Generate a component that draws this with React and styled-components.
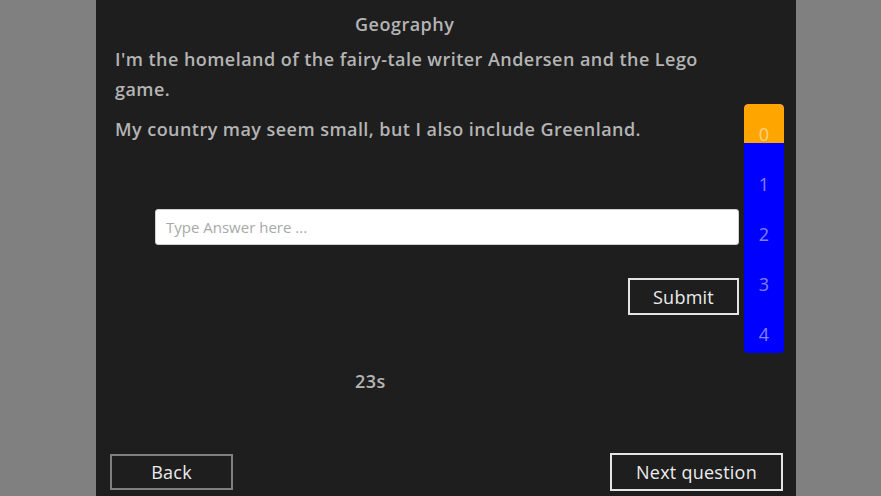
import React from "react";
import styled, { createGlobalStyle } from "styled-components";

const Global = createGlobalStyle`
  html, body { margin: 0; padding: 0; background: #808080; }
  body { font-family: "Open Sans", "Noto Sans", sans-serif; }
  * { box-sizing: border-box; }
`;

const Page = styled.div`
  display: flex;
  padding-left: 96px;
  height: 496px;
  overflow: hidden;
`;

const Panel = styled.div`
  width: 700px;
  height: 496px;
  background: #1e1e1e;
  display: flex;
  flex-direction: column;
`;

const Title = styled.div`
  padding: 12px 0 0 259px;
  font-size: 18px;
  line-height: 24px;
  font-weight: 600;
  letter-spacing: 0.5px;
  color: #b4b4b4;
`;

const Body = styled.div`
  display: flex;
  margin-top: 8px;
  padding-right: 12px;
`;

const Main = styled.div`
  flex: 1;
  padding-left: 19px;
  display: flex;
  flex-direction: column;
`;

const Question = styled.p`
  margin: ${(p) => (p.$first ? "0" : "10px")} 0 0;
  max-width: 600px;
  font-size: 18px;
  line-height: 30px;
  font-weight: 600;
  letter-spacing: 0.45px;
  color: #b4b4b4;
`;

const Input = styled.input`
  margin: 65px 0 0 40px;
  height: 36px;
  border: 1px solid #d0d0d0;
  border-radius: 3px;
  background: #fff;
  padding: 0 10px;
  font-family: inherit;
  font-size: 15px;
  outline: none;
  &::placeholder { color: #a8a8a8; }
`;

const Button = styled.button`
  background: transparent;
  border: 2px solid ${(p) => (p.$muted ? "#808080" : "#e4e4e4")};
  color: #ececec;
  font-family: inherit;
  font-size: 18px;
  letter-spacing: 0.25px;
  padding: 0;
  width: ${(p) => p.$w}px;
  height: ${(p) => p.$h}px;
  cursor: pointer;
`;

const SubmitRow = styled.div`
  display: flex;
  justify-content: flex-end;
  margin-top: 33px;
`;

const Timer = styled.div`
  margin-top: 54px;
  padding-left: 240px;
  font-size: 18px;
  line-height: 24px;
  font-weight: 600;
  letter-spacing: 0.5px;
  color: #b4b4b4;
`;

const Sidebar = styled.div`
  width: 40px;
  margin: 60px 0 0 5px;
  background: #0000ff;
  border-radius: 4px;
  overflow: hidden;
  align-self: flex-start;
  display: flex;
  flex-direction: column;
`;

const Step = styled.div`
  height: ${(p) => (p.$last ? 49 : 50)}px;
  padding-top: 20px;
  text-align: center;
  font-size: 18px;
  line-height: 20px;
  color: rgba(255, 255, 255, 0.5);
  background: ${(p) =>
    p.$active ? "linear-gradient(#ffa500 0 39px, transparent 39px)" : "transparent"};
  border-radius: ${(p) => (p.$active ? "4px 4px 0 0" : "0")};
`;

const Footer = styled.div`
  margin-top: auto;
  display: flex;
  justify-content: space-between;
  align-items: center;
  padding: 0 13px 5px 14px;
`;

export default function App() {
  const steps = [0, 1, 2, 3, 4];
  return (
    <>
      <Global />
      <Page>
        <Panel>
          <Title>Geography</Title>
          <Body>
            <Main>
              <Question $first>
                I'm the homeland of the fairy-tale writer Andersen and the Lego game.
              </Question>
              <Question>My country may seem small, but I also include Greenland.</Question>
              <Input placeholder="Type Answer here ..." />
              <SubmitRow>
                <Button $w={111} $h={37}>Submit</Button>
              </SubmitRow>
              <Timer>23s</Timer>
            </Main>
            <Sidebar>
              {steps.map((s, i) => (
                <Step key={s} $active={i === 0} $last={i === steps.length - 1}>
                  {s}
                </Step>
              ))}
            </Sidebar>
          </Body>
          <Footer>
            <Button $muted $w={123} $h={36}>Back</Button>
            <Button $w={173} $h={38}>Next question</Button>
          </Footer>
        </Panel>
      </Page>
    </>
  );
}
